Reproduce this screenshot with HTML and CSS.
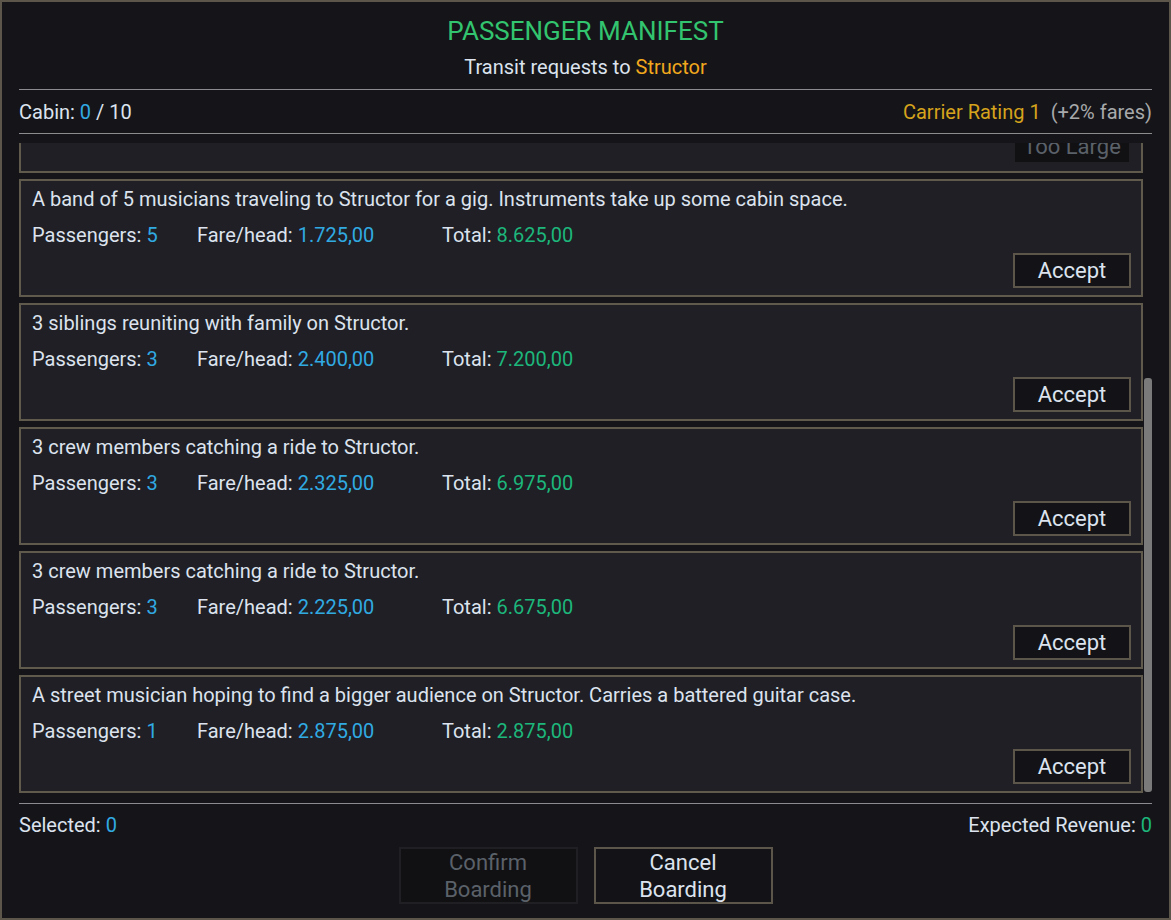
FILE: index.html
```html
<!DOCTYPE html>
<html lang="en">
<head>
    <meta charset="UTF-8">
    <title>Passenger Manifest</title>
    <link rel="stylesheet" href="styles.css">
</head>
<body>

    <div class="manifest">
        <h1>PASSENGER MANIFEST</h1>
        <div class="subtitle">Transit requests to <span class="orange">Structor</span></div>

        <div class="info-row">
            <div>Cabin: <span class="blue">0</span> / 10</div>
            <div><span class="gold">Carrier Rating 1</span>&nbsp; <span class="muted">(+2% fares)</span></div>
        </div>

        <div class="list-wrap">
            <div class="list">
                <div class="request">
                    <div class="desc">A wealthy family of 12 with their entire household staff.</div>
                    <div class="stats">
                        <span class="stat">Passengers: <span class="blue">12</span></span>
                        <span class="stat fare">Fare/head: <span class="blue">2.100,00</span></span>
                        <span class="stat">Total: <span class="green">25.200,00</span></span>
                    </div>
                    <div class="actions"><button class="btn disabled">Too Large</button></div>
                </div>
                <div class="request">
                    <div class="desc">A band of 5 musicians traveling to Structor for a gig. Instruments take up some cabin space.</div>
                    <div class="stats">
                        <span class="stat">Passengers: <span class="blue">5</span></span>
                        <span class="stat fare">Fare/head: <span class="blue">1.725,00</span></span>
                        <span class="stat">Total: <span class="green">8.625,00</span></span>
                    </div>
                    <div class="actions"><button class="btn">Accept</button></div>
                </div>
                <div class="request">
                    <div class="desc">3 siblings reuniting with family on Structor.</div>
                    <div class="stats">
                        <span class="stat">Passengers: <span class="blue">3</span></span>
                        <span class="stat fare">Fare/head: <span class="blue">2.400,00</span></span>
                        <span class="stat">Total: <span class="green">7.200,00</span></span>
                    </div>
                    <div class="actions"><button class="btn">Accept</button></div>
                </div>
                <div class="request">
                    <div class="desc">3 crew members catching a ride to Structor.</div>
                    <div class="stats">
                        <span class="stat">Passengers: <span class="blue">3</span></span>
                        <span class="stat fare">Fare/head: <span class="blue">2.325,00</span></span>
                        <span class="stat">Total: <span class="green">6.975,00</span></span>
                    </div>
                    <div class="actions"><button class="btn">Accept</button></div>
                </div>
                <div class="request">
                    <div class="desc">3 crew members catching a ride to Structor.</div>
                    <div class="stats">
                        <span class="stat">Passengers: <span class="blue">3</span></span>
                        <span class="stat fare">Fare/head: <span class="blue">2.225,00</span></span>
                        <span class="stat">Total: <span class="green">6.675,00</span></span>
                    </div>
                    <div class="actions"><button class="btn">Accept</button></div>
                </div>
                <div class="request">
                    <div class="desc">A street musician hoping to find a bigger audience on Structor. Carries a battered guitar case.</div>
                    <div class="stats">
                        <span class="stat">Passengers: <span class="blue">1</span></span>
                        <span class="stat fare">Fare/head: <span class="blue">2.875,00</span></span>
                        <span class="stat">Total: <span class="green">2.875,00</span></span>
                    </div>
                    <div class="actions"><button class="btn">Accept</button></div>
                </div>
            </div>
            <div class="scrollbar"><div class="thumb"></div></div>
        </div>

        <div class="footer-row">
            <div>Selected: <span class="blue">0</span></div>
            <div>Expected Revenue: <span class="green">0</span></div>
        </div>

        <div class="bottom-buttons">
            <button class="btn big disabled">Confirm<br>Boarding</button>
            <button class="btn big">Cancel<br>Boarding</button>
        </div>
    </div>

</body>
</html>
```

FILE: styles.css
```css
body {
    margin: 0;
    font-family: 'Roboto', 'Liberation Sans', sans-serif;
    background-color: #151519;
    color: #dce3ee;
}

.manifest {
    box-sizing: border-box;
    width: 1171px;
    height: 920px;
    border: 2px solid #5b5649;
    background-color: #151519;
    padding: 14px 17px 0 17px;
    display: flex;
    flex-direction: column;
}

h1 {
    margin: 0;
    text-align: center;
    font-size: 26px;
    line-height: 30px;
    font-weight: normal;
    color: #33c46f;
}

.subtitle {
    margin-top: 9px;
    text-align: center;
    font-size: 20px;
    line-height: 24px;
    padding-bottom: 10px;
    border-bottom: 1px solid #8c8c8e;
}

.orange { color: #f2a81d; }
.gold { color: #d6a31c; }
.muted { color: #a8a9ab; }
.blue { color: #31aae2; }
.green { color: #1db67b; }

.info-row {
    display: flex;
    justify-content: space-between;
    align-items: center;
    height: 43px;
    font-size: 20px;
    line-height: 24px;
    border-bottom: 1px solid #8c8c8e;
}

.list-wrap {
    margin-top: 9px;
    height: 652px;
    display: flex;
    gap: 1px;
}

.list {
    flex: 1;
    display: flex;
    flex-direction: column;
    justify-content: flex-end;
    gap: 6px;
    overflow: hidden;
    padding-bottom: 2px;
}

.request {
    flex-shrink: 0;
    box-sizing: border-box;
    height: 118px;
    border: 2px solid #5f5a4b;
    background-color: #1f1f25;
    padding: 6px 10px 7px 11px;
    font-size: 20px;
    line-height: 24px;
}

.stats {
    margin-top: 12px;
    display: flex;
}

.stat {
    width: 165px;
}

.stat.fare {
    width: 245px;
}

.actions {
    margin-top: 6px;
    display: flex;
    justify-content: flex-end;
}

.btn {
    box-sizing: border-box;
    width: 118px;
    height: 35px;
    padding: 0;
    border: 2px solid #5b5649;
    background-color: #131317;
    color: #dce3ee;
    font-family: 'Roboto', 'Liberation Sans', sans-serif;
    font-size: 22px;
    line-height: 26px;
}

.btn.disabled {
    border-color: #202024;
    background-color: #111114;
    color: #5b6169;
}

.scrollbar {
    width: 8px;
    display: flex;
    flex-direction: column;
    justify-content: flex-end;
    padding-bottom: 3px;
}

.thumb {
    height: 414px;
    background-color: #7a7a7a;
    border-radius: 3px;
}

.footer-row {
    margin-top: 8px;
    border-top: 1px solid #8c8c8e;
    padding-top: 9px;
    display: flex;
    justify-content: space-between;
    font-size: 20px;
    line-height: 24px;
}

.bottom-buttons {
    margin-top: 10px;
    display: flex;
    justify-content: center;
    gap: 16px;
}

.btn.big {
    width: 179px;
    height: 57px;
    line-height: 27px;
}
```
